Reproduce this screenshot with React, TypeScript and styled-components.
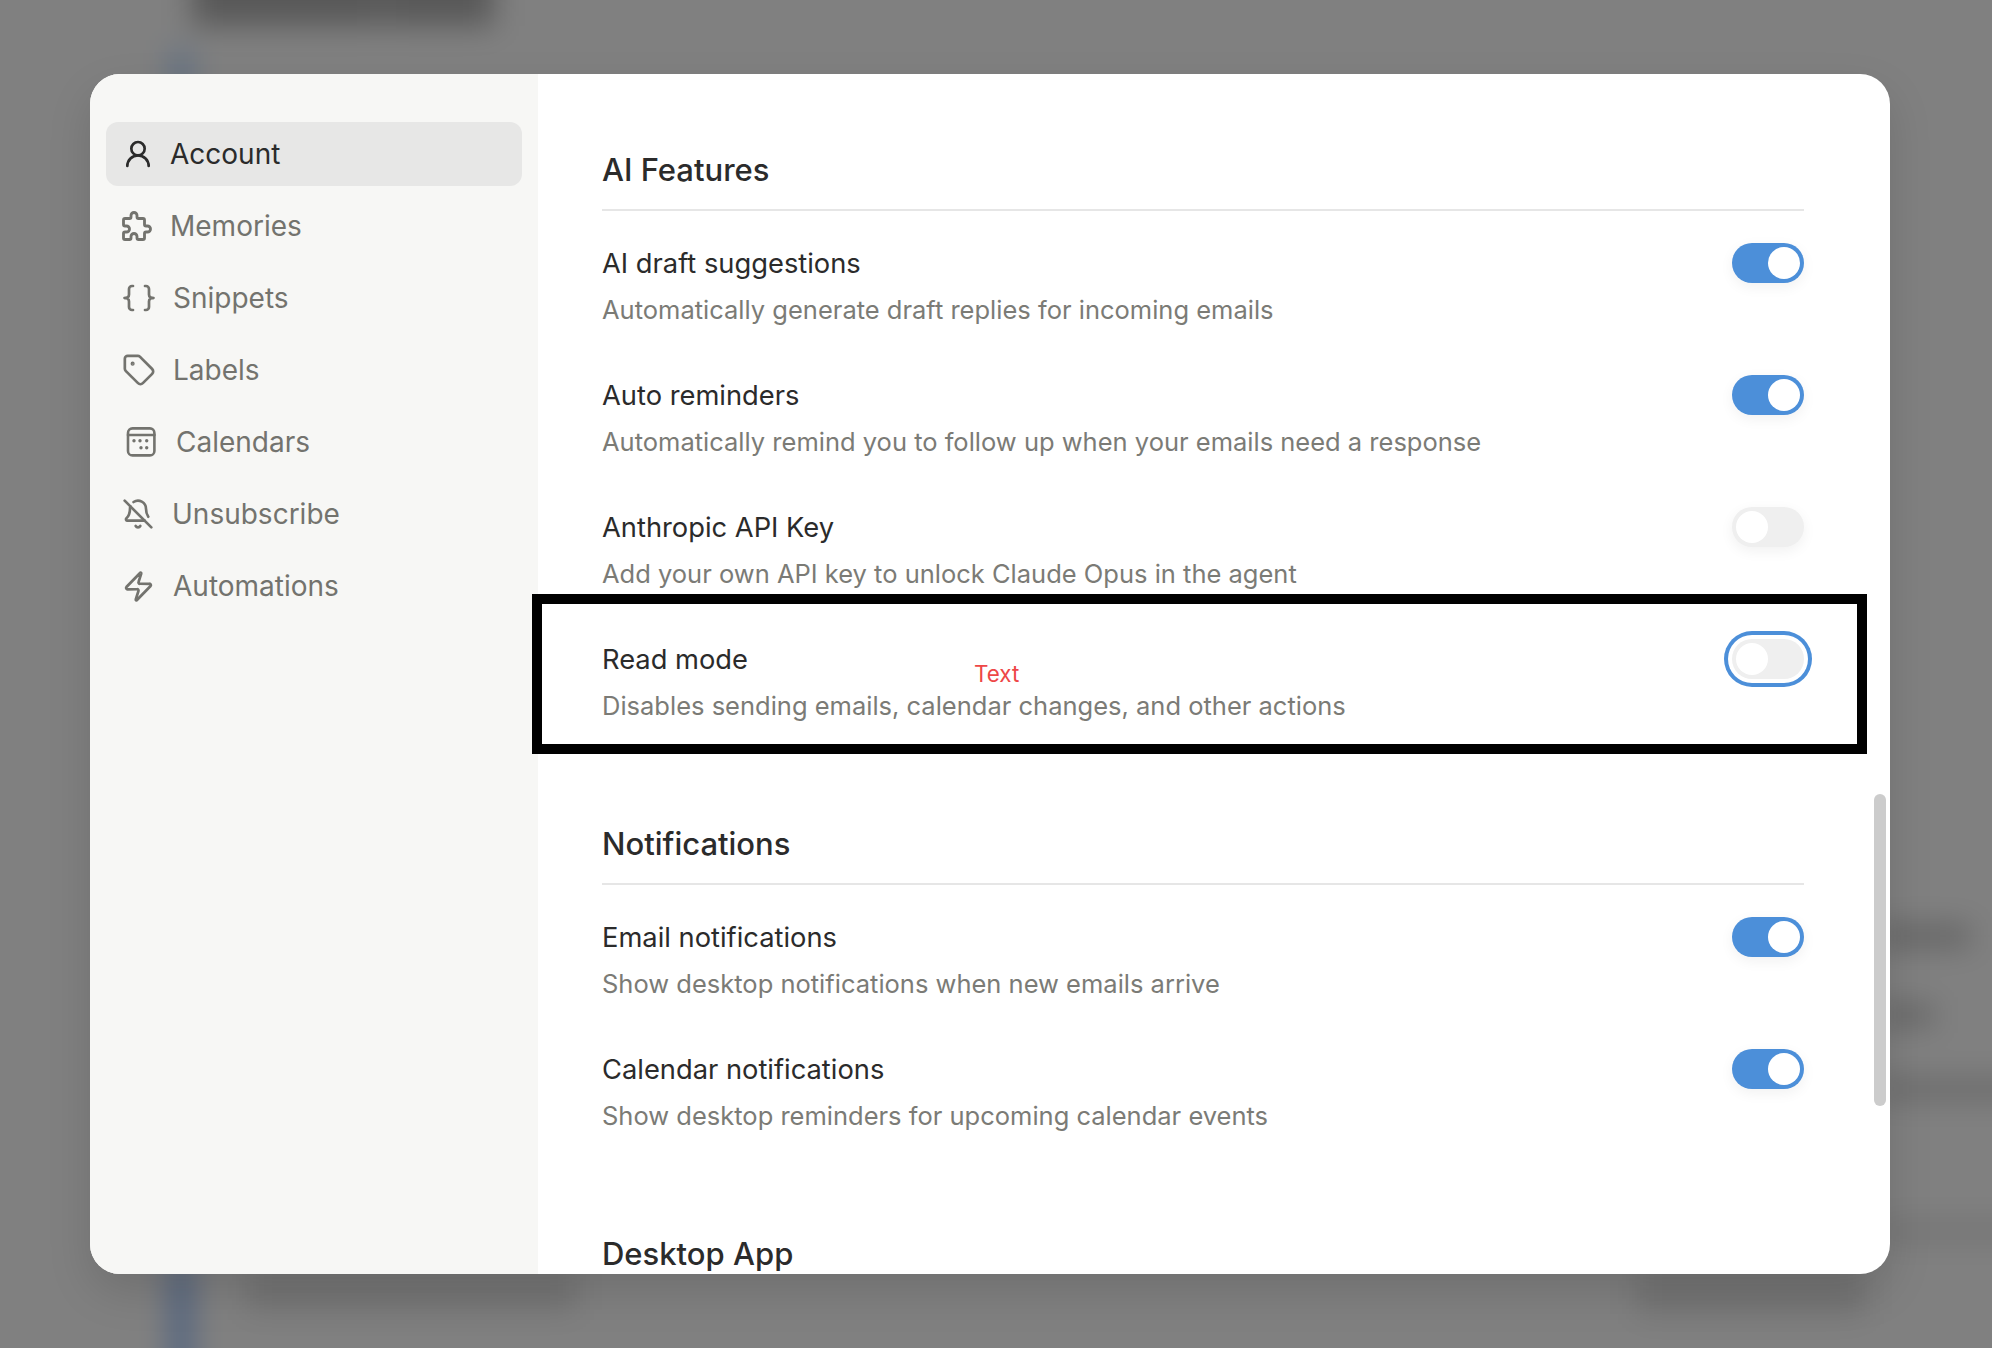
import React from 'react';
import styled, { createGlobalStyle } from 'styled-components';
import { UserRound, Tag, BellOff, Zap } from 'lucide-react';

const GlobalStyle = createGlobalStyle`
  html, body {
    margin: 0;
    padding: 0;
    height: 100%;
    overflow: hidden;
    background: #808080;
    font-family: Inter, "Liberation Sans", sans-serif;
    -webkit-font-smoothing: antialiased;
  }
`;

const Page = styled.div`
  position: relative;
  width: 1992px;
  height: 1348px;
  padding: 74px 102px 74px 90px;
  box-sizing: border-box;
  background: #808080;
  overflow: hidden;
`;

// what's left of the app behind the dialog, blurred.
// Sits 40px past the page edges so the blur doesn't fade out at the border
const bar = (c: string) => `linear-gradient(${c}, ${c})`;
const Backdrop = styled.div`
  position: absolute;
  inset: -40px;
  background-color: #808080;
  background-repeat: no-repeat;
  background-image:
    ${bar('#585858')}, ${bar('#585858')},
    ${bar('#5f6f84')}, ${bar('#4f6280')},
    ${bar('#727272')}, ${bar('#727272')},
    ${bar('#606060')}, ${bar('#606060')}, ${bar('#666666')}, ${bar('#6e6e6e')};
  background-size:
    190px 66px, 110px 66px,
    22px 44px, 22px 130px,
    330px 40px, 230px 44px,
    90px 20px, 54px 18px, 150px 18px, 150px 14px;
  background-position:
    232px 0, 424px 0,
    210px 90px, 210px 1300px,
    286px 1310px, 1676px 1310px,
    1920px 966px, 1920px 1046px, 1920px 1120px, 1920px 1264px;
  filter: blur(15px);
`;

const ModalShadow = styled.div`
  position: relative;
  border-radius: 30px;
  box-shadow: 0 18px 44px rgba(0, 0, 0, 0.13);
`;

const Modal = styled.div`
  position: relative;
  display: flex;
  height: 1200px;
  border-radius: 30px;
  overflow: hidden;
  background: #fff;
`;

const Sidebar = styled.nav`
  width: 448px;
  flex-shrink: 0;
  box-sizing: border-box;
  padding: 48px 16px 0;
  background: #f7f7f5;
  display: flex;
  flex-direction: column;
  gap: 8px;
`;

const NavItem = styled.div<{ $active?: boolean; $gap: number }>`
  height: 64px;
  display: flex;
  align-items: center;
  gap: ${({ $gap }) => $gap}px;
  padding-left: 16px;
  border-radius: 12px;
  font-size: 28px;
  font-weight: 400;
  color: ${({ $active }) => ($active ? '#2b2b2b' : '#73736e')};
  background: ${({ $active }) => ($active ? '#e7e7e6' : 'transparent')};

  svg {
    flex-shrink: 0;
  }
`;

const Content = styled.main`
  flex: 1;
  min-width: 0;
  padding: 68px 86px 0 64px;
  display: flex;
  flex-direction: column;
  gap: 73px;
`;

const Section = styled.section`
  display: flex;
  flex-direction: column;
`;

const SectionTitle = styled.h2<{ $plain?: boolean }>`
  margin: 0 0 4px;
  height: 56px;
  line-height: 56px;
  font-size: 31px;
  font-weight: 500;
  color: #2b2b2b;
  border-bottom: ${({ $plain }) => ($plain ? 'none' : '2px solid #e6e6e6')};
  padding-bottom: 11px;
`;

const Row = styled.div`
  display: flex;
  align-items: flex-start;
  justify-content: space-between;
  height: 132px;
  padding-top: 32px;
  box-sizing: border-box;
`;

const RowText = styled.div`
  display: flex;
  flex-direction: column;
  gap: 13px;
`;

const RowTitle = styled.div`
  font-size: 27.3px;
  line-height: 34px;
  color: #2b2b2b;
`;

const RowDesc = styled.div`
  font-size: 25.5px;
  line-height: 32px;
  color: #7b7b76;
`;

const Toggle = styled.div<{ $on?: boolean; $focused?: boolean }>`
  width: 72px;
  height: 40px;
  margin-top: -4px;
  padding: 4px;
  box-sizing: border-box;
  flex-shrink: 0;
  display: flex;
  justify-content: ${({ $on }) => ($on ? 'flex-end' : 'flex-start')};
  border-radius: 20px;
  background: ${({ $on }) => ($on ? '#4c8fd9' : '#efefef')};
  box-shadow: ${({ $focused }) =>
    $focused
      ? '0 0 0 4px #fff, 0 0 0 8px #4c8fd9'
      : '0 4px 14px rgba(0, 0, 0, 0.06)'};
`;

const Thumb = styled.span`
  width: 32px;
  height: 32px;
  border-radius: 50%;
  background: #fff;
`;

const ScrollThumb = styled.div`
  position: absolute;
  top: 720px;
  right: 4px;
  width: 12px;
  height: 312px;
  border-radius: 6px;
  background: #ccc;
`;

// annotation drawn on top of the screenshot
const HighlightBox = styled.div`
  position: absolute;
  left: 532px;
  top: 594px;
  width: 1335px;
  height: 160px;
  box-sizing: border-box;
  border: 10px solid #000;
`;

const HighlightLabel = styled.span`
  position: absolute;
  left: 974px;
  top: 659px;
  font-size: 22.4px;
  line-height: 30px;
  color: #ee4747;
`;

const PuzzleIcon = () => (
  <svg width="30" height="30" viewBox="2 2 20 20" fill="none" stroke="currentColor" strokeWidth="1.9" strokeLinecap="round" strokeLinejoin="round">
    <path d="M4 7h3a1 1 0 0 0 1-1v-1a2 2 0 0 1 4 0v1a1 1 0 0 0 1 1h3a1 1 0 0 1 1 1v3a1 1 0 0 0 1 1h1a2 2 0 0 1 0 4h-1a1 1 0 0 0-1 1v3a1 1 0 0 1-1 1h-3a1 1 0 0 1-1-1v-1a2 2 0 0 0-4 0v1a1 1 0 0 1-1 1h-3a1 1 0 0 1-1-1v-3a1 1 0 0 1 1-1h1a2 2 0 0 0 0-4h-1a1 1 0 0 1-1-1v-3a1 1 0 0 1 1-1" />
  </svg>
);

const BracesIcon = () => (
  <svg width="34" height="32" viewBox="0 0 34 32" fill="none" stroke="currentColor" strokeWidth="2.7" strokeLinecap="round" strokeLinejoin="round">
    <path d="M11 4h-1a3 3 0 0 0-3 3v5.5a3.5 3.5 0 0 1-4.5 3.5 3.5 3.5 0 0 1 4.5 3.5V25a3 3 0 0 0 3 3h1" />
    <path d="M23 4h1a3 3 0 0 1 3 3v5.5a3.5 3.5 0 0 0 4.5 3.5 3.5 3.5 0 0 0-4.5 3.5V25a3 3 0 0 1-3 3h-1" />
  </svg>
);

const CalendarIcon = () => (
  <svg width="34" height="32" viewBox="0 0 34 32" fill="none" stroke="currentColor" strokeWidth="2.6" strokeLinecap="round" strokeLinejoin="round">
    <rect x="6" y="2.4" width="26.4" height="27" rx="4.5" />
    <path d="M6 9h26.4" />
    <g fill="currentColor" stroke="none">
      <circle cx="12" cy="14.7" r="1.7" />
      <circle cx="18" cy="14.7" r="1.7" />
      <circle cx="24.7" cy="14.7" r="1.7" />
      <circle cx="19" cy="21.7" r="1.7" />
      <circle cx="24.7" cy="21.7" r="1.7" />
    </g>
  </svg>
);

type NavEntry = {
  label: string;
  icon: React.ReactNode;
  gap: number;
  active?: boolean;
};

const navItems: NavEntry[] = [
  { label: 'Account', icon: <UserRound size={32} strokeWidth={2} />, gap: 16, active: true },
  { label: 'Memories', icon: <PuzzleIcon />, gap: 18 },
  { label: 'Snippets', icon: <BracesIcon />, gap: 17 },
  { label: 'Labels', icon: <Tag size={34} strokeWidth={1.9} />, gap: 17 },
  { label: 'Calendars', icon: <CalendarIcon />, gap: 20 },
  { label: 'Unsubscribe', icon: <BellOff size={32} strokeWidth={2} />, gap: 18 },
  { label: 'Automations', icon: <Zap size={33} strokeWidth={2} />, gap: 18 },
];

type Setting = { title: string; desc: string; on?: boolean; focused?: boolean };

const aiSettings: Setting[] = [
  { title: 'AI draft suggestions', desc: 'Automatically generate draft replies for incoming emails', on: true },
  { title: 'Auto reminders', desc: 'Automatically remind you to follow up when your emails need a response', on: true },
  { title: 'Anthropic API Key', desc: 'Add your own API key to unlock Claude Opus in the agent' },
  { title: 'Read mode', desc: 'Disables sending emails, calendar changes, and other actions', focused: true },
];

const notificationSettings: Setting[] = [
  { title: 'Email notifications', desc: 'Show desktop notifications when new emails arrive', on: true },
  { title: 'Calendar notifications', desc: 'Show desktop reminders for upcoming calendar events', on: true },
];

const SettingRow = ({ title, desc, on, focused }: Setting) => (
  <Row>
    <RowText>
      <RowTitle>{title}</RowTitle>
      <RowDesc>{desc}</RowDesc>
    </RowText>
    <Toggle $on={on} $focused={focused}>
      <Thumb />
    </Toggle>
  </Row>
);

export default function App() {
  return (
    <Page>
      <GlobalStyle />
      <Backdrop />
      <ModalShadow>
        <Modal>
          <Sidebar>
            {navItems.map(({ label, icon, gap, active }) => (
              <NavItem key={label} $active={active} $gap={gap}>
                {icon}
                {label}
              </NavItem>
            ))}
          </Sidebar>
          <Content>
            <Section>
              <SectionTitle>AI Features</SectionTitle>
              {aiSettings.map((s) => (
                <SettingRow key={s.title} {...s} />
              ))}
            </Section>
            <Section>
              <SectionTitle>Notifications</SectionTitle>
              {notificationSettings.map((s) => (
                <SettingRow key={s.title} {...s} />
              ))}
            </Section>
            <Section>
              <SectionTitle $plain>Desktop App</SectionTitle>
            </Section>
          </Content>
          <ScrollThumb />
        </Modal>
      </ModalShadow>
      <HighlightBox />
      <HighlightLabel>Text</HighlightLabel>
    </Page>
  );
}
